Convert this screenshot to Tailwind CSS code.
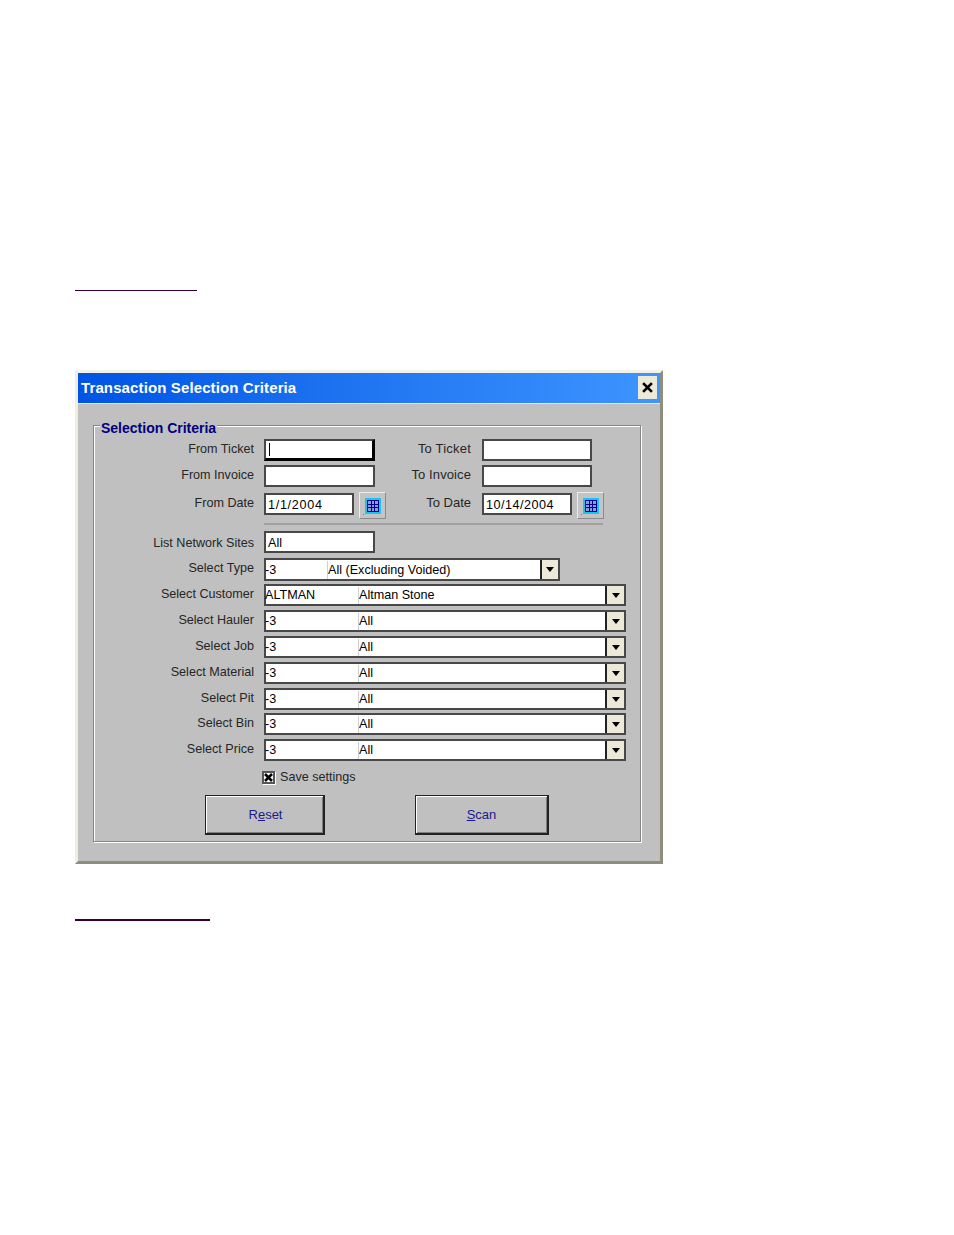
<!DOCTYPE html>
<html lang="en">
<head>
  <meta charset="UTF-8">
  <title>Transaction Selection Criteria</title>
  <script src="https://cdn.jsdelivr.net/npm/@tailwindcss/browser@4"></script>
</head>
<body class="bg-white pt-[290px] pl-[75px] font-['Liberation_Sans',sans-serif] text-[12.6px] text-[#262626]">

  <div class="h-px w-[122px] bg-[#330033]"></div>

  <!-- Dialog -->
  <div class="mt-[79px] w-[588px] h-[494px] bg-[#c0c0c0] border-[3px] border-t-[#f4f2e8] border-l-[#f0eee2] border-r-[#8f8d7c] border-b-[#8f8d7c]">

    <div class="h-[30px] flex items-center justify-between pl-[3px] pr-[2px] bg-gradient-to-r from-[#0054e3] to-[#3d95ff]">
      <span class="text-white font-bold text-[15px] tracking-[0.12px]">Transaction Selection Criteria</span>
      <span class="w-[20px] h-[24px] flex items-center justify-center bg-[#ece9d8] border-r border-b border-[#8a8873]">
        <svg width="11" height="11" viewBox="0 0 10 10"><path d="M1 1l8 8M9 1l-8 8" stroke="#000" stroke-width="2.4"/></svg>
      </span>
    </div>
    <div class="h-px bg-[#e8e8e8]"></div>

    <!-- Group box -->
    <div class="relative ml-[15px] mt-[21px] w-[548px] h-[417px] border border-[#858585] shadow-[inset_1px_1px_0_#fff,1px_1px_0_#fff] pt-[13px]">
      <span class="absolute left-[6px] top-[-6px] px-[1px] bg-[#c0c0c0] text-[14px] font-bold text-[#000080] leading-[16px]">Selection Criteria</span>

      <div class="flex h-[22px]">
        <span class="w-[160px] mr-[10px] h-[20px] flex items-center justify-end">From Ticket</span>
        <span class="w-[111px] h-[22px] flex items-center pl-[3px] bg-white border-2 border-[#484848] border-r-[3px] border-b-[3px] border-r-black border-b-black"><span class="w-px h-[13px] bg-black"></span></span>
        <span class="w-[96px] mr-[11px] h-[20px] flex items-center justify-end text-[13px] tracking-[0.2px]">To Ticket</span>
        <span class="w-[110px] h-[22px] bg-white border-2 border-[#484848]"></span>
      </div>

      <div class="flex h-[22px] mt-[4px]">
        <span class="w-[160px] mr-[10px] h-[20px] flex items-center justify-end">From Invoice</span>
        <span class="w-[111px] h-[22px] bg-white border-2 border-[#484848]"></span>
        <span class="w-[96px] mr-[11px] h-[20px] flex items-center justify-end text-[13px] tracking-[0.1px]">To Invoice</span>
        <span class="w-[110px] h-[22px] bg-white border-2 border-[#484848]"></span>
      </div>

      <div class="flex h-[22px] mt-[6px]">
        <span class="w-[160px] mr-[10px] h-[20px] flex items-center justify-end">From Date</span>
        <span class="w-[90px] h-[22px] flex items-center pl-[2px] pt-[2px] bg-white border-2 border-[#484848] text-black tracking-[0.7px]">1/1/2004</span>
        <span class="ml-[5px] mt-[-1px] w-[27px] h-[27px] bg-[#c4c4c4] border border-t-[#ececec] border-l-[#ececec] border-r-[#8c8c8c] border-b-[#8c8c8c]">
          <svg width="25" height="25" viewBox="0 0 25 25"><rect x="5" y="5" width="16" height="16" fill="#18c4f0"/><rect x="7" y="7" width="12" height="12" fill="#000088"/><path d="M8 8h3v3H8zM12 8h2v3h-2zM15 8h3v3h-3zM8 12h3v2H8zM12 12h2v2h-2zM15 12h3v2h-3zM8 15h3v3H8zM12 15h2v3h-2zM15 15h3v3h-3z" fill="#8a9ce0"/><rect x="3" y="21" width="1" height="1" fill="#777"/></svg>
        </span>
        <span class="w-[85px] mr-[11px] h-[20px] flex items-center justify-end text-[13px]">To Date</span>
        <span class="w-[90px] h-[22px] flex items-center pl-[2px] pt-[2px] bg-white border-2 border-[#484848] text-black tracking-[0.5px]">10/14/2004</span>
        <span class="ml-[5px] mt-[-1px] w-[27px] h-[27px] bg-[#c4c4c4] border border-t-[#ececec] border-l-[#ececec] border-r-[#8c8c8c] border-b-[#8c8c8c]">
          <svg width="25" height="25" viewBox="0 0 25 25"><rect x="5" y="5" width="16" height="16" fill="#18c4f0"/><rect x="7" y="7" width="12" height="12" fill="#000088"/><path d="M8 8h3v3H8zM12 8h2v3h-2zM15 8h3v3h-3zM8 12h3v2H8zM12 12h2v2h-2zM15 12h3v2h-3zM8 15h3v3H8zM12 15h2v3h-2zM15 15h3v3h-3z" fill="#8a9ce0"/><rect x="3" y="21" width="1" height="1" fill="#777"/></svg>
        </span>
      </div>

      <div class="ml-[170px] mt-[8px] w-[339px] h-[2px] bg-[#a0a0a0]"></div>

      <div class="flex h-[22px] mt-[6px]">
        <span class="w-[160px] mr-[10px] h-[22px] pt-[2px] flex items-center justify-end">List Network Sites</span>
        <span class="w-[111px] h-[22px] flex items-center pl-[2px] pt-[2px] bg-white border-2 border-[#484848] text-black">All</span>
      </div>

      <div class="flex h-[23px] mt-[5px]">
        <span class="w-[160px] mr-[10px] h-[21px] flex items-center justify-end">Select Type</span>
        <div class="w-[296px] flex pt-px bg-white border-2 border-[#484848] text-black">
          <span class="w-[63px] -ml-px flex items-center border-r border-[#cfcfcf]">-3</span>
          <span class="flex-1 flex items-center">All (Excluding Voided)</span>
          <span class="-mt-px w-[18px] flex items-center justify-center bg-[#ece9d8] border-l-2 border-[#222]"><svg width="8" height="5" viewBox="0 0 8 5"><path d="M0 0h8L4 5z" fill="#000"/></svg></span>
        </div>
      </div>

      <div class="flex h-[22px] mt-[3px]">
        <span class="w-[160px] mr-[10px] h-[20px] flex items-center justify-end">Select Customer</span>
        <div class="w-[362px] flex pt-px bg-white border-2 border-[#484848] text-black">
          <span class="w-[94px] -ml-px flex items-center border-r border-[#cfcfcf]">ALTMAN</span>
          <span class="flex-1 flex items-center">Altman Stone</span>
          <span class="-mt-px w-[19px] flex items-center justify-center bg-[#ece9d8] border-l-2 border-[#222]"><svg width="8" height="5" viewBox="0 0 8 5"><path d="M0 0h8L4 5z" fill="#000"/></svg></span>
        </div>
      </div>

      <div class="flex h-[22px] mt-[4px]">
        <span class="w-[160px] mr-[10px] h-[20px] flex items-center justify-end">Select Hauler</span>
        <div class="w-[362px] flex pt-px bg-white border-2 border-[#484848] text-black">
          <span class="w-[94px] -ml-px flex items-center border-r border-[#cfcfcf]">-3</span>
          <span class="flex-1 flex items-center">All</span>
          <span class="-mt-px w-[19px] flex items-center justify-center bg-[#ece9d8] border-l-2 border-[#222]"><svg width="8" height="5" viewBox="0 0 8 5"><path d="M0 0h8L4 5z" fill="#000"/></svg></span>
        </div>
      </div>

      <div class="flex h-[22px] mt-[4px]">
        <span class="w-[160px] mr-[10px] h-[20px] flex items-center justify-end">Select Job</span>
        <div class="w-[362px] flex pt-px bg-white border-2 border-[#484848] text-black">
          <span class="w-[94px] -ml-px flex items-center border-r border-[#cfcfcf]">-3</span>
          <span class="flex-1 flex items-center">All</span>
          <span class="-mt-px w-[19px] flex items-center justify-center bg-[#ece9d8] border-l-2 border-[#222]"><svg width="8" height="5" viewBox="0 0 8 5"><path d="M0 0h8L4 5z" fill="#000"/></svg></span>
        </div>
      </div>

      <div class="flex h-[22px] mt-[4px]">
        <span class="w-[160px] mr-[10px] h-[20px] flex items-center justify-end">Select Material</span>
        <div class="w-[362px] flex pt-px bg-white border-2 border-[#484848] text-black">
          <span class="w-[94px] -ml-px flex items-center border-r border-[#cfcfcf]">-3</span>
          <span class="flex-1 flex items-center">All</span>
          <span class="-mt-px w-[19px] flex items-center justify-center bg-[#ece9d8] border-l-2 border-[#222]"><svg width="8" height="5" viewBox="0 0 8 5"><path d="M0 0h8L4 5z" fill="#000"/></svg></span>
        </div>
      </div>

      <div class="flex h-[22px] mt-[4px]">
        <span class="w-[160px] mr-[10px] h-[20px] flex items-center justify-end">Select Pit</span>
        <div class="w-[362px] flex pt-px bg-white border-2 border-[#484848] text-black">
          <span class="w-[94px] -ml-px flex items-center border-r border-[#cfcfcf]">-3</span>
          <span class="flex-1 flex items-center">All</span>
          <span class="-mt-px w-[19px] flex items-center justify-center bg-[#ece9d8] border-l-2 border-[#222]"><svg width="8" height="5" viewBox="0 0 8 5"><path d="M0 0h8L4 5z" fill="#000"/></svg></span>
        </div>
      </div>

      <div class="flex h-[22px] mt-[3px]">
        <span class="w-[160px] mr-[10px] h-[20px] flex items-center justify-end">Select Bin</span>
        <div class="w-[362px] flex pt-px bg-white border-2 border-[#484848] text-black">
          <span class="w-[94px] -ml-px flex items-center border-r border-[#cfcfcf]">-3</span>
          <span class="flex-1 flex items-center">All</span>
          <span class="-mt-px w-[19px] flex items-center justify-center bg-[#ece9d8] border-l-2 border-[#222]"><svg width="8" height="5" viewBox="0 0 8 5"><path d="M0 0h8L4 5z" fill="#000"/></svg></span>
        </div>
      </div>

      <div class="flex h-[22px] mt-[4px]">
        <span class="w-[160px] mr-[10px] h-[20px] flex items-center justify-end">Select Price</span>
        <div class="w-[362px] flex pt-px bg-white border-2 border-[#484848] text-black">
          <span class="w-[94px] -ml-px flex items-center border-r border-[#cfcfcf]">-3</span>
          <span class="flex-1 flex items-center">All</span>
          <span class="-mt-px w-[19px] flex items-center justify-center bg-[#ece9d8] border-l-2 border-[#222]"><svg width="8" height="5" viewBox="0 0 8 5"><path d="M0 0h8L4 5z" fill="#000"/></svg></span>
        </div>
      </div>

      <div class="flex items-center h-[14px] mt-[9px] ml-[168px]">
        <span class="w-[13px] h-[13px] flex items-center justify-center bg-white border-2 border-[#555] shadow-[1px_1px_0_#fff]">
          <svg width="9" height="9" viewBox="0 0 9 9"><path d="M1 1l7 7M8 1l-7 7" stroke="#000" stroke-width="2.6"/></svg>
        </span>
        <span class="ml-[5px]">Save settings</span>
      </div>

      <div class="flex mt-[11px] ml-[111px]">
        <span class="w-[120px] h-[40px] flex items-center justify-center pl-[2px] text-[13px] text-[#1a1a8c] border border-[#222] border-r-2 border-b-2 shadow-[inset_1px_1px_0_#fff,inset_-1px_-1px_0_#808080]"><span>R<span class="underline">e</span>set</span></span>
        <span class="ml-[90px] w-[134px] h-[40px] flex items-center justify-center text-[13px] text-[#1a1a8c] border border-[#222] border-r-2 border-b-2 shadow-[inset_1px_1px_0_#fff,inset_-1px_-1px_0_#808080]"><span><span class="underline">S</span>can</span></span>
      </div>
    </div>
  </div>

  <div class="mt-[55px] h-[2px] w-[135px] bg-[#330033]"></div>
</body>
</html>
